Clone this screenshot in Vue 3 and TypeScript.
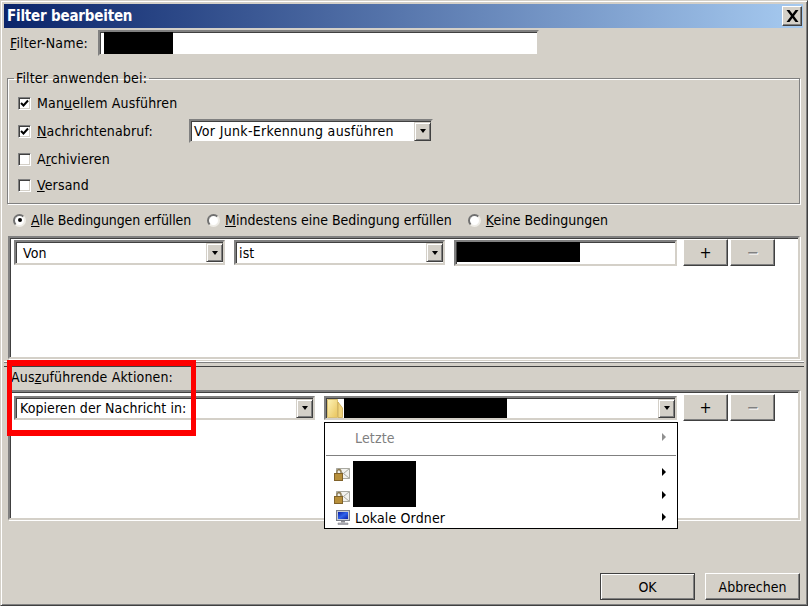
<script setup lang="ts">
const triggers = [
  { pre: 'Man', key: 'u', post: 'ellem Ausführen' },
  { pre: 'A', key: 'r', post: 'chivieren' },
  { pre: '', key: 'V', post: 'ersand' },
]
const radios = [
  { key: 'A', post: 'lle Bedingungen erfüllen', on: true },
  { key: 'M', post: 'indestens eine Bedingung erfüllen', on: false },
  { key: 'K', post: 'eine Bedingungen', on: false },
]
</script>

<template>
  <div class="window">
    <div class="title">
      <span>Filter bearbeiten</span>
      <button class="close" aria-label="Schließen">
        <svg width="13" height="12" viewBox="0 0 13 12"><path d="M0.500 0h3L6.500 4 9.500 0h3L8 6l4.500 6h-3L6.500 8 3.500 12h-3L5 6z" fill="#000"/></svg>
      </button>
    </div>
    <div class="content">
      <div class="name-row">
        <label class="name-label"><u>F</u>ilter-Name:</label>
        <div class="field name-field"><i class="mask name-mask"></i></div>
      </div>

      <fieldset class="group">
        <legend>Filter anwenden bei:</legend>
        <div class="check-row first">
          <span class="check"><svg width="9" height="9" viewBox="0 0 9 9"><path d="M1 4l2.500 2.500L8 1.500" fill="none" stroke="#000" stroke-width="2"/></svg></span>
          <span>{{ triggers[0].pre }}<u>{{ triggers[0].key }}</u>{{ triggers[0].post }}</span>
        </div>
        <div class="check-row second">
          <span class="check"><svg width="9" height="9" viewBox="0 0 9 9"><path d="M1 4l2.500 2.500L8 1.500" fill="none" stroke="#000" stroke-width="2"/></svg></span>
          <span class="abruf"><u>N</u>achrichtenabruf:</span>
          <div class="select junk"><span class="sel-text junk-text">Vor Junk-Erkennung ausführen</span><span class="arrow"><i></i></span></div>
        </div>
        <div class="check-row other">
          <span class="check"></span>
          <span>{{ triggers[1].pre }}<u>{{ triggers[1].key }}</u>{{ triggers[1].post }}</span>
        </div>
        <div class="check-row other">
          <span class="check"></span>
          <span><u>{{ triggers[2].key }}</u>{{ triggers[2].post }}</span>
        </div>
      </fieldset>

      <div class="radio-row">
        <span v-for="(r, i) in radios" :key="i" class="radio-item" :class="'r' + i">
          <span class="radio" :class="{ on: r.on }"></span>
          <span><u>{{ r.key }}</u>{{ r.post }}</span>
        </span>
      </div>

      <div class="list cond-list">
        <div class="rule">
          <div class="select von"><span class="sel-text von-text">Von</span><span class="arrow"><i></i></span></div>
          <div class="select ist"><span class="sel-text">ist</span><span class="arrow"><i></i></span></div>
          <div class="field value"><i class="mask value-mask"></i></div>
          <button class="btn pm">+</button>
          <button class="btn pm minus">−</button>
        </div>
      </div>

      <div class="splitter"></div>

      <div class="actions-label">Aus<u>z</u>uführende Aktionen:</div>

      <div class="list action-list">
        <div class="rule action-rule">
          <div class="select kopieren"><span class="sel-text kop-text">Kopieren der Nachricht in:</span><span class="arrow"><i></i></span></div>
          <div class="select folder">
            <svg class="folder-ico" width="16" height="19" viewBox="0 0 16 19">
              <defs><linearGradient id="fg" x1="0" y1="0" x2="1" y2="1"><stop offset="0" stop-color="#fdf3b8"/><stop offset="1" stop-color="#e9c45c"/></linearGradient></defs>
              <path d="M0.500 0.500h10v18h-10z" fill="url(#fg)" stroke="#d9bf72"/>
              <path d="M11 3l4.500 6v9.500H11z" fill="#f0d47e" stroke="#c9a850" stroke-width="0.800"/>
            </svg>
            <i class="mask folder-mask"></i>
            <span class="arrow"><i></i></span>
          </div>
          <button class="btn pm act-pm">+</button>
          <button class="btn pm minus act-pm">−</button>
        </div>
      </div>

      <div class="footer">
        <button class="btn dialog default">OK</button>
        <button class="btn dialog">Abbrechen</button>
      </div>
    </div>

    <div class="highlight"></div>

    <div class="menu">
      <div class="menu-item recent"><span class="menu-text">Letzte</span><i class="sub grey"></i></div>
      <div class="menu-sep"></div>
      <div class="menu-item acct">
        <svg class="acct-ico" width="16" height="13" viewBox="0 0 16 13"><path d="M2.500 0.500h13v10h-13z" fill="#f2f2ee" stroke="#a8a8a0"/><path d="M2.500 0.500l7 5 6-5M15.500 10.500l-6-5" fill="none" stroke="#a8a8a0"/><path d="M3 5.500v-2a2 2 0 0 1 4 0v2" fill="none" stroke="#8c7a50" stroke-width="1.300"/><rect x="0.500" y="5.500" width="8" height="7" fill="#b78f3a" stroke="#80622a"/></svg>
        <i class="sub"></i>
      </div>
      <div class="menu-item acct">
        <svg class="acct-ico" width="16" height="13" viewBox="0 0 16 13"><path d="M2.500 0.500h13v10h-13z" fill="#f2f2ee" stroke="#a8a8a0"/><path d="M2.500 0.500l7 5 6-5M15.500 10.500l-6-5" fill="none" stroke="#a8a8a0"/><path d="M3 5.500v-2a2 2 0 0 1 4 0v2" fill="none" stroke="#8c7a50" stroke-width="1.300"/><rect x="0.500" y="5.500" width="8" height="7" fill="#b78f3a" stroke="#80622a"/></svg>
        <i class="sub"></i>
      </div>
      <div class="menu-item local">
        <svg class="pc-ico" width="14" height="15" viewBox="0 0 14 15">
          <defs><linearGradient id="pg" x1="0" y1="0" x2="1" y2="1"><stop offset="0" stop-color="#0a1fa8"/><stop offset="0.500" stop-color="#2f62ea"/><stop offset="1" stop-color="#0a1fa8"/></linearGradient></defs>
          <rect x="0.500" y="0.500" width="13" height="10" fill="#c8ccd4" stroke="#7a7e8a"/>
          <rect x="2" y="2" width="10" height="7" fill="url(#pg)"/>
          <path d="M5 11h4v1.500H5z" fill="#8a8a90"/>
          <path d="M2 13h10v1.500H2z" fill="#b4b4bc" stroke="#77777f" stroke-width="0.500"/>
        </svg>
        <span class="menu-text dark">Lokale Ordner</span><i class="sub"></i>
      </div>
      <i class="mask menu-mask"></i>
    </div>
  </div>
</template>

<style>
html, body { margin: 0; background: #d4d0c8; }
</style>

<style scoped>
* { box-sizing: border-box; }
.window {
  position: relative;
  width: 808px;
  height: 606px;
  overflow: hidden;
  background: #d4d0c8;
  font-family: "DejaVu Sans Condensed", "Liberation Sans", sans-serif;
  font-size: 14px;
  letter-spacing: 0.15px;
  color: #000;
  border-style: solid;
  border-width: 1px;
  border-color: #d4d0c8 #404040 #404040 #d4d0c8;
  box-shadow: inset 1px 1px 0 #fff, inset -1px -1px 0 #808080;
  padding: 3px 4px 0 3px;
}
.title {
  height: 24px;
  display: flex;
  align-items: center;
  justify-content: space-between;
  padding: 0 1px 0 3px;
  background: linear-gradient(90deg, #0a246a, #a6caf0);
  color: #fff;
  font-weight: 700;
  font-size: 15px;
  letter-spacing: -0.2px;
}
.close {
  width: 20px;
  height: 20px;
  padding: 0;
  margin: 0;
  display: flex;
  align-items: center;
  justify-content: center;
  background: #d4d0c8;
  border: 1px solid;
  border-color: #fff #404040 #404040 #fff;
  box-shadow: inset -1px -1px 0 #808080;
}
.content { display: flex; flex-direction: column; height: 575px; }
.name-row { display: flex; align-items: flex-start; height: 27px; margin-top: 2px; padding-left: 6px; }
.name-label { width: 88px; line-height: 26px; }
.field {
  background: #fff;
  border: 2px solid;
  border-color: #808080 #d4d0c8 #d4d0c8 #808080;
  box-shadow: inset 1px 1px 0 #404040;
}
.name-field { width: 441px; height: 26px; padding: 0 0 0 4px; }
.mask { display: block; background: #000; }
.name-mask { width: 69px; height: 22px; }
.group {
  margin: 13px 0 0 3px;
  padding: 0;
  width: 793px;
  height: 134px;
  border: 1px solid #808080;
  box-shadow: 1px 1px 0 #fff, inset 1px 1px 0 #fff;
}
.group legend { margin-left: 6px; padding: 0 2px; line-height: 16px; }
.check-row { display: flex; align-items: center; height: 20px; padding-left: 10px; gap: 6px; }
.first { margin-top: 7px; }
.second { margin-top: 6px; height: 24px; }
.other { margin-top: 6px; }
.check {
  width: 13px;
  height: 13px;
  display: flex;
  align-items: center;
  justify-content: center;
  background: #fff;
  border: 1px solid;
  border-color: #808080 #fff #fff #808080;
  box-shadow: inset 1px 1px 0 #404040, inset -1px -1px 0 #d4d0c8;
  flex: none;
}
.abruf { width: 146px; }
.select {
  display: flex;
  align-items: center;
  height: 25px;
  background: #fff;
  border: 2px solid;
  border-color: #808080 #d4d0c8 #d4d0c8 #808080;
  box-shadow: inset 1px 1px 0 #404040;
  flex: none;
}
.sel-text { flex: 1; padding-left: 3px; white-space: nowrap; }
.junk-text { letter-spacing: 0.32px; }
.kop-text { padding-left: 4px; letter-spacing: 0.08px; }
.arrow {
  width: 17px;
  height: 19px;
  flex: none;
  display: flex;
  align-items: center;
  justify-content: center;
  background: #d4d0c8;
  border: 1px solid;
  border-color: #d4d0c8 #404040 #404040 #d4d0c8;
  box-shadow: inset 1px 1px 0 #fff, inset -1px -1px 0 #808080;
}
.arrow i { width: 0; height: 0; border: 3.500px solid transparent; border-top: 4px solid #000; border-bottom: 0; }
.junk { width: 244px; height: 24px; }
.radio-row { display: flex; height: 20px; margin-top: 6px; align-items: center; letter-spacing: 0; }
.radio-item { display: flex; align-items: center; gap: 6px; }
.r0 { margin-left: 9px; letter-spacing: -0.12px; }
.r1 { margin-left: 16px; }
.r2 { margin-left: 16px; }
.radio {
  width: 13px;
  height: 13px;
  margin-right: -1px;
  border-radius: 50%;
  background: #fff;
  border: 2px solid;
  border-color: #707070 #eeece6 #eeece6 #707070;
  display: flex;
  align-items: center;
  justify-content: center;
  flex: none;
}
.radio.on::after { content: ""; width: 4px; height: 4px; border-radius: 50%; background: #000; }
.list {
  margin-left: 4px;
  width: 792px;
  background: #fff;
  border: 2px solid;
  border-color: #808080 #d4d0c8 #d4d0c8 #808080;
  box-shadow: inset 1px 1px 0 #404040, 1px 1px 0 #fff;
}
.cond-list { height: 123px; margin-top: 6px; padding: 2px 0 0 4px; }
.rule { display: flex; align-items: flex-start; }
.von { width: 211px; }
.von-text { padding-left: 7px; }
.ist { width: 211px; margin-left: 9px; }
.value { width: 223px; height: 26px; margin-left: 9px; padding: 0 0 0 1px; }
.value-mask { width: 123px; height: 20px; }
.btn {
  background: #d4d0c8;
  border: 1px solid;
  border-color: #fff #404040 #404040 #fff;
  box-shadow: inset -1px -1px 0 #808080;
  font: inherit;
  letter-spacing: 0;
  color: #000;
  padding: 0;
}
.pm { width: 45px; height: 27px; margin-left: 6px; margin-top: -1px; font-size: 16px; flex: none; }
.pm.minus { margin-left: 2px; color: #808080; text-shadow: 1px 1px 0 #fff; }
.act-pm { margin-top: -2px; }
.splitter {
  height: 6px;
  margin-top: 2px;
  width: 800px;
  border-top: 1px solid #fff;
  border-bottom: 1px solid #404040;
  box-shadow: inset 0 1px 0 #808080;
}
.actions-label { height: 23px; line-height: 21px; padding-left: 7px; }
.action-list { height: 130px; padding: 4px 0 0 4px; }
.kopieren { width: 301px; height: 24px; }
.folder { width: 353px; height: 24px; margin-left: 9px; }
.folder-ico { margin-left: 1px; flex: none; }
.folder-mask { width: 163px; height: 20px; margin-left: 1px; }
.folder .arrow { margin-left: auto; }
.footer { margin-top: auto; margin-bottom: 3px; display: flex; justify-content: flex-end; gap: 10px; padding-right: 3px; }
.dialog { width: 95px; height: 27px; }
.default { border-color: #404040; box-shadow: inset 1px 1px 0 #fff, inset -1px -1px 0 #808080; }
.highlight {
  position: absolute;
  left: 6px;
  top: 359px;
  width: 189px;
  height: 76px;
  border-style: solid;
  border-width: 6px 5px;
  border-color: #fe0000;
  pointer-events: none;
}
.menu {
  position: absolute;
  left: 323px;
  top: 421px;
  width: 354px;
  height: 107px;
  background: #fff;
  border: 1px solid #000;
}
.menu-item { position: relative; display: flex; align-items: center; height: 23px; }
.recent { height: 31px; padding-bottom: 2px; }
.menu-text { margin-left: 30px; color: #808080; }
.menu-text.dark { margin-left: 5px; color: #000; }
.menu-sep { height: 1px; margin: 1px 1px 5px; background: #808080; }
.acct-ico { margin-left: 9px; margin-top: 3px; }
.acct .sub { margin-top: -5px; }
.local { height: 21px; }
.pc-ico { margin-left: 11px; }
.sub {
  position: absolute;
  right: 11px;
  top: 50%;
  margin-top: -4px;
  width: 0;
  height: 0;
  border: 4px solid transparent;
  border-left-color: #000;
  border-right: 0;
}
.local .sub { margin-top: -5px; }
.sub.grey { border-left-color: #909090; margin-top: -6px; }
.menu-mask { position: absolute; left: 28px; top: 38px; width: 63px; height: 46px; }
</style>
